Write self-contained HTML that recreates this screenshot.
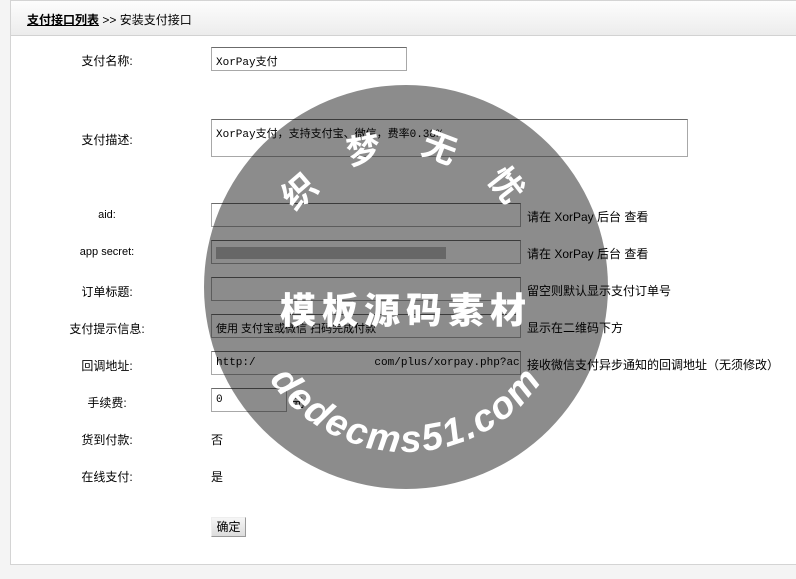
<!DOCTYPE html>
<html><head><meta charset="utf-8"><style>
*{margin:0;padding:0;box-sizing:border-box}
body{width:796px;height:579px;background:#f4f4f4;font:12px "Liberation Sans","Noto Sans CJK SC",sans-serif;color:#000;position:relative;overflow:hidden}
.panel{position:absolute;left:10px;top:0;width:800px;height:565px;background:#fff;border:1px solid #d4d4d4}
.hd{position:absolute;left:0;top:0;right:0;height:35px;background:linear-gradient(#fdfdfd,#ececec);border-bottom:1px solid #d2d2d2}
.hd span{position:absolute;left:16px;top:10px;font-size:12px}
.hd u{font-weight:bold}
.lb{position:absolute;left:60px;width:94px;text-align:center;font-size:12px}
.in{position:absolute;left:211px;height:24px;border:1px solid #a8a8a8;border-top-color:#6b6b6b;background:#fff;font-family:"Liberation Mono","Noto Sans CJK SC",monospace;font-size:11px;padding:5px 4px;white-space:nowrap;overflow:hidden}
.tip{position:absolute;left:527px;font-size:12px}
.v{position:absolute;left:211px}
.btn{position:absolute;left:211px;top:517px;width:35px;height:20px;border:1px solid #999;border-top-color:#eee;border-left-color:#eee;background:linear-gradient(#f6f6f6,#dcdcdc);text-align:center;line-height:18px}
svg{position:absolute;left:0;top:0}
.mul{mix-blend-mode:multiply}
</style></head><body>
<div class="panel"><div class="hd"><span><u>支付接口列表</u> &gt;&gt; 安装支付接口</span></div></div>
<div class="lb" style="top:52px">支付名称:</div>
<div class="in" style="top:47px;width:196px">XorPay支付</div>
<div class="lb" style="top:131px">支付描述:</div>
<div class="in" style="top:119px;width:477px;height:38px">XorPay支付，支持支付宝、微信，费率0.38%</div>
<div class="lb" style="top:209px;font-size:11px">aid:</div>
<div class="in" style="top:203px;width:310px"></div>
<div class="tip" style="top:208px">请在 XorPay 后台 查看</div>
<div class="lb" style="top:246px;font-size:11px">app secret:</div>
<div class="in" style="top:240px;width:310px"><div style="width:230px;height:12px;background:#bbb;margin-top:1px"></div></div>
<div class="tip" style="top:245px">请在 XorPay 后台 查看</div>
<div class="lb" style="top:283px">订单标题:</div>
<div class="in" style="top:277px;width:310px"></div>
<div class="tip" style="top:282px">留空则默认显示支付订单号</div>
<div class="lb" style="top:320px">支付提示信息:</div>
<div class="in" style="top:314px;width:310px;font-family:'Liberation Sans','Noto Sans CJK SC',sans-serif">使用 支付宝或微信 扫码完成付款</div>
<div class="tip" style="top:319px">显示在二维码下方</div>
<div class="lb" style="top:357px">回调地址:</div>
<div class="in" style="top:351px;width:310px">http:/&nbsp;&nbsp;&nbsp;&nbsp;&nbsp;&nbsp;&nbsp;&nbsp;&nbsp;&nbsp;&nbsp;&nbsp;&nbsp;&nbsp;&nbsp;&nbsp;&nbsp;&nbsp;com/plus/xorpay.php?action=n</div>
<div class="tip" style="top:356px">接收微信支付异步通知的回调地址（无须修改）</div>
<div class="lb" style="top:394px">手续费:</div>
<div class="in" style="top:388px;width:76px">0</div>
<div class="v" style="left:292px;top:394px">元</div>
<div class="lb" style="top:431px">货到付款:</div>
<div class="v" style="top:431px">否</div>
<div class="lb" style="top:468px">在线支付:</div>
<div class="v" style="top:468px">是</div>
<div class="btn">确定</div>
<svg class="mul" width="796" height="579"><circle cx="406" cy="287" r="202" fill="#8c8c8c"/></svg>
<svg width="796" height="579">
<defs>
<path id="tp" d="M 276,287 A 130 130 0 0 1 536,287"/>
<path id="bp" d="M 241,287 A 165 165 0 0 0 571,287"/>
</defs>
<text font-family="'Noto Sans CJK SC',sans-serif" font-weight="bold" font-size="34" fill="#fff" letter-spacing="36"><textPath href="#tp" startOffset="53%" text-anchor="middle">织梦无忧</textPath></text>
<text x="406" y="323" text-anchor="middle" font-family="'Noto Sans CJK SC',sans-serif" font-weight="900" font-size="36" fill="#fff" letter-spacing="6">模板源码素材</text>
<text font-family="'Liberation Sans',sans-serif" font-weight="bold" font-style="italic" font-size="38" fill="#fff" letter-spacing="2"><textPath href="#bp" startOffset="50%" text-anchor="middle">dedecms51.com</textPath></text>
</svg>
</body></html>
